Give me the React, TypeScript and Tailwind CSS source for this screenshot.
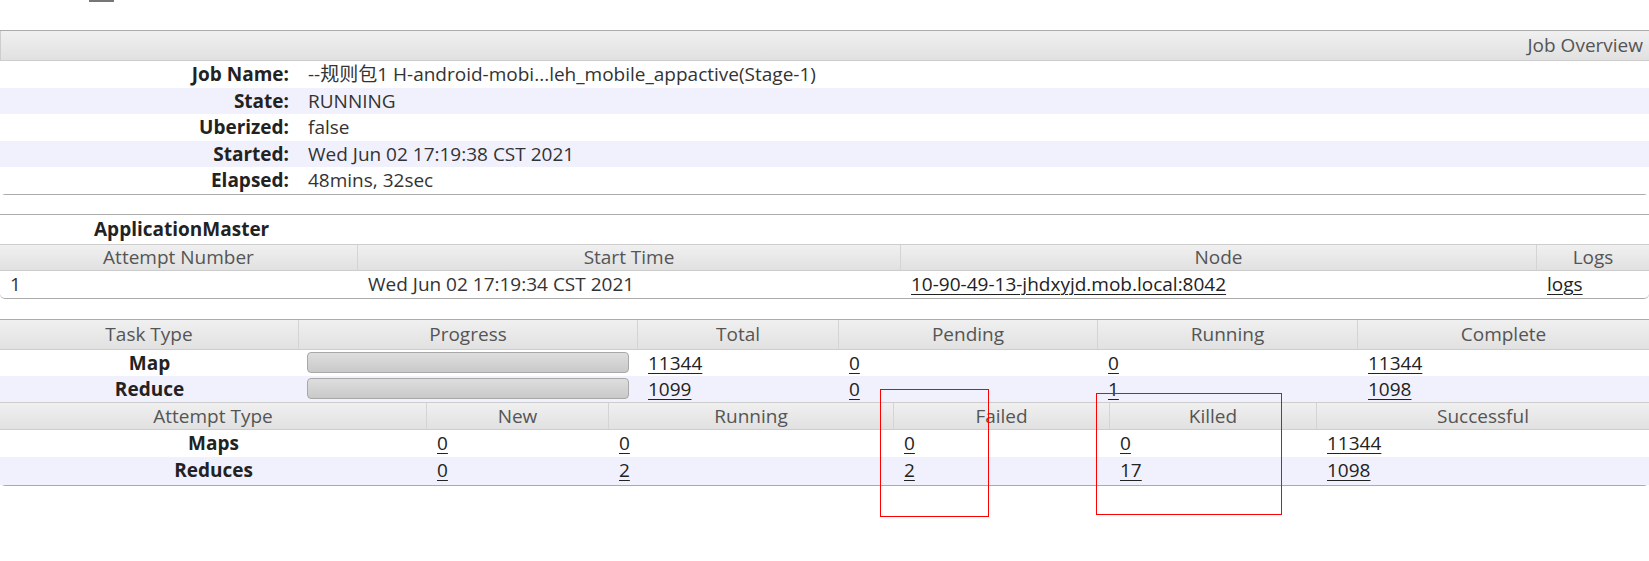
import React from "react";

const font = { fontFamily: '"Open Sans", "Noto Sans", "Noto Sans CJK SC", sans-serif' };

const hdr = "bg-gradient-to-b from-[#f0f0f0] to-[#e1e1e1] text-[#555] text-[19px] text-center border-r border-[#d4d4d4] last:border-r-0";

function Link({ children }: { children: React.ReactNode }) {
  return <span className="underline text-[#222] underline-offset-[3px] decoration-1">{children}</span>;
}

function Bar() {
  return (
    <div className="h-[21px] w-[322px] ml-[8px] rounded-[4px] border border-[#a8a8a8] bg-gradient-to-b from-[#dedede] to-[#c9c9c9]" />
  );
}

const G2 = "grid grid-cols-[358px_543px_636px_1fr]";
const G3 = "grid grid-cols-[299px_339px_201px_259px_260px_1fr]";
const G4 = "grid grid-cols-[427px_182px_285px_216px_207px_1fr]";

export default function App() {
  const info: [string, string][] = [
    ["Job Name:", "--规则包1 H-android-mobi...leh_mobile_appactive(Stage-1)"],
    ["State:", "RUNNING"],
    ["Uberized:", "false"],
    ["Started:", "Wed Jun 02 17:19:38 CST 2021"],
    ["Elapsed:", "48mins, 32sec"],
  ];
  return (
    <div className="relative w-[1649px] h-[561px] bg-white text-[#222] text-[19px] overflow-hidden" style={font}>
      <div className="h-[2px] flex"><div className="ml-[89px] w-[25px] h-[2px] bg-[#777]" /></div>
      <div className="h-[28px]" />
      {/* Job Overview */}
      <div className="border-t border-b border-[#ababab] rounded-b-[5px]">
        <div className="h-[30px] bg-gradient-to-b from-[#f0f0f0] to-[#e1e1e1] border-b border-l border-[#cdcdcd] text-right pr-[6px] text-[#555] leading-[29px]">
          Job Overview
        </div>
        {info.map(([k, v], i) => (
          <div key={k} className={`flex h-[26.6px] leading-[26.6px] ${i % 2 ? "bg-[#f1f1fd]" : "bg-white"}`}>
            <div className="w-[289px] text-right font-bold text-[#222]">{k}</div>
            <div className="pl-[19px] text-[#333]">{v}</div>
          </div>
        ))}
      </div>
      <div className="h-[19px]" />
      {/* ApplicationMaster */}
      <div className="border-t border-b border-[#ababab] rounded-b-[5px]">
        <div className="h-[29px] leading-[29px] pl-[94px] font-bold text-[#222]">ApplicationMaster</div>
        <div className={`${G2} border-t border-b border-[#cdcdcd] leading-[25px]`}>
          <div className={hdr}>Attempt Number</div>
          <div className={hdr}>Start Time</div>
          <div className={hdr}>Node</div>
          <div className={hdr}>Logs</div>
        </div>
        <div className={`${G2} h-[27px] leading-[27px] text-[#333]`}>
          <div className="pl-[10px]">1</div>
          <div className="pl-[10px]">Wed Jun 02 17:19:34 CST 2021</div>
          <div className="pl-[10px]"><Link>10-90-49-13-jhdxyjd.mob.local:8042</Link></div>
          <div className="pl-[10px]"><Link>logs</Link></div>
        </div>
      </div>
      <div className="h-[20px]" />
      {/* Tasks */}
      <div className="border-t border-b border-[#ababab] rounded-b-[5px]">
        <div className={`${G3} border-b border-[#cdcdcd] leading-[29px]`}>
          <div className={hdr}>Task Type</div>
          <div className={hdr}>Progress</div>
          <div className={hdr}>Total</div>
          <div className={hdr}>Pending</div>
          <div className={hdr}>Running</div>
          <div className={hdr}>Complete</div>
        </div>
        {[
          ["Map", "11344", "0", "0", "11344"],
          ["Reduce", "1099", "0", "1", "1098"],
        ].map((r, i) => (
          <div key={r[0]} className={`${G3} h-[26px] leading-[26px] items-center ${i % 2 ? "bg-[#f1f1fd]" : "bg-white"}`}>
            <div className="text-center font-bold">{r[0]}</div>
            <div><Bar /></div>
            <div className="pl-[10px]"><Link>{r[1]}</Link></div>
            <div className="pl-[10px]"><Link>{r[2]}</Link></div>
            <div className="pl-[10px]"><Link>{r[3]}</Link></div>
            <div className="pl-[10px]"><Link>{r[4]}</Link></div>
          </div>
        ))}
        <div className={`${G4} border-t border-b border-[#cdcdcd] leading-[26px]`}>
          <div className={hdr}>Attempt Type</div>
          <div className={hdr}>New</div>
          <div className={hdr}>Running</div>
          <div className={hdr}>Failed</div>
          <div className={hdr}>Killed</div>
          <div className={hdr}>Successful</div>
        </div>
        {[
          ["Maps", "0", "0", "0", "0", "11344"],
          ["Reduces", "0", "2", "2", "17", "1098"],
        ].map((r, i) => (
          <div key={r[0]} className={`${G4} h-[27.5px] leading-[27.5px] ${i % 2 ? "bg-[#f1f1fd]" : "bg-white"}`}>
            <div className="text-center font-bold">{r[0]}</div>
            <div className="pl-[10px]"><Link>{r[1]}</Link></div>
            <div className="pl-[10px]"><Link>{r[2]}</Link></div>
            <div className="pl-[10px]"><Link>{r[3]}</Link></div>
            <div className="pl-[10px]"><Link>{r[4]}</Link></div>
            <div className="pl-[10px]"><Link>{r[5]}</Link></div>
          </div>
        ))}
      </div>
      {/* annotation boxes */}
      <div className="absolute left-[880px] top-[389px] w-[109px] h-[128px] border border-[#ff0000]" />
      <div className="absolute left-[1096px] top-[393px] w-[186px] h-[122px] border border-[#ff0000]" />
    </div>
  );
}
